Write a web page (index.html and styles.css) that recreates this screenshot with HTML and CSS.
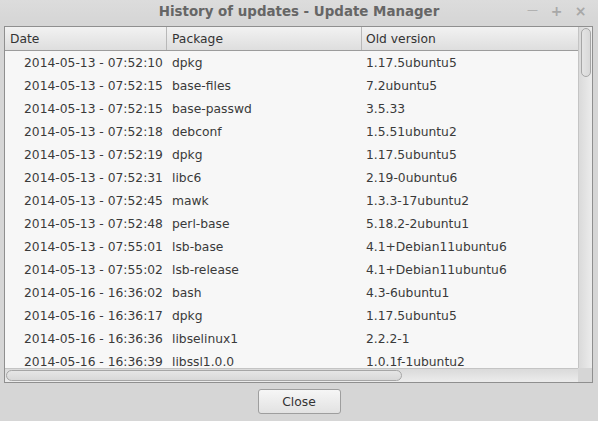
FILE: index.html
```html
<!DOCTYPE html>
<html>
<head>
<meta charset="utf-8">
<link rel="stylesheet" href="styles.css">
</head>
<body>
<div class="window">
  <div class="titlebar">
    <div></div>
    <div class="title">History of updates - Update Manager</div>
    <div class="controls"><span class="ctl">&#8212;</span><span class="ctl">+</span><span class="ctl">&#215;</span></div>
  </div>
  <div class="frame">
    <div class="view">
      <div class="row header">
        <div class="c1">Date</div><div class="c2">Package</div><div class="c3">Old version</div>
      </div>
      <div class="body">
        <div class="row"><div class="c1">2014-05-13 - 07:52:10</div><div class="c2">dpkg</div><div class="c3">1.17.5ubuntu5</div></div>
        <div class="row"><div class="c1">2014-05-13 - 07:52:15</div><div class="c2">base-files</div><div class="c3">7.2ubuntu5</div></div>
        <div class="row"><div class="c1">2014-05-13 - 07:52:15</div><div class="c2">base-passwd</div><div class="c3">3.5.33</div></div>
        <div class="row"><div class="c1">2014-05-13 - 07:52:18</div><div class="c2">debconf</div><div class="c3">1.5.51ubuntu2</div></div>
        <div class="row"><div class="c1">2014-05-13 - 07:52:19</div><div class="c2">dpkg</div><div class="c3">1.17.5ubuntu5</div></div>
        <div class="row"><div class="c1">2014-05-13 - 07:52:31</div><div class="c2">libc6</div><div class="c3">2.19-0ubuntu6</div></div>
        <div class="row"><div class="c1">2014-05-13 - 07:52:45</div><div class="c2">mawk</div><div class="c3">1.3.3-17ubuntu2</div></div>
        <div class="row"><div class="c1">2014-05-13 - 07:52:48</div><div class="c2">perl-base</div><div class="c3">5.18.2-2ubuntu1</div></div>
        <div class="row"><div class="c1">2014-05-13 - 07:55:01</div><div class="c2">lsb-base</div><div class="c3">4.1+Debian11ubuntu6</div></div>
        <div class="row"><div class="c1">2014-05-13 - 07:55:02</div><div class="c2">lsb-release</div><div class="c3">4.1+Debian11ubuntu6</div></div>
        <div class="row"><div class="c1">2014-05-16 - 16:36:02</div><div class="c2">bash</div><div class="c3">4.3-6ubuntu1</div></div>
        <div class="row"><div class="c1">2014-05-16 - 16:36:17</div><div class="c2">dpkg</div><div class="c3">1.17.5ubuntu5</div></div>
        <div class="row"><div class="c1">2014-05-16 - 16:36:36</div><div class="c2">libselinux1</div><div class="c3">2.2.2-1</div></div>
        <div class="row"><div class="c1">2014-05-16 - 16:36:39</div><div class="c2">libssl1.0.0</div><div class="c3">1.0.1f-1ubuntu2</div></div>
      </div>
    </div>
    <div class="vscroll"><div class="vslider"></div></div>
    <div class="hscroll"><div class="hslider"></div></div>
    <div class="corner"></div>
  </div>
  <div class="actions">
    <button class="btn">Close</button>
  </div>
</div>
</body>
</html>
```

FILE: styles.css
```css
* { box-sizing: border-box; }
html, body { margin: 0; padding: 0; }
body {
  width: 598px;
  height: 421px;
  background: #d6d6d6;
  font-family: "DejaVu Sans", sans-serif;
  color: #3a3a3a;
  overflow: hidden;
}
.window {
  display: flex;
  flex-direction: column;
  height: 421px;
}
.titlebar {
  height: 22px;
  display: grid;
  grid-template-columns: 1fr auto 1fr;
  align-items: center;
  background: linear-gradient(#dcdcdc, #d6d6d6);
}
.title {
  font-weight: bold;
  font-size: 13.4px;
  color: #666666;
  padding-top: 1px;
}
.controls {
  display: flex;
  justify-content: flex-end;
  gap: 9px;
  padding-right: 10px;
  color: #a8a8a8;
  font-weight: bold;
  font-size: 14px;
}
.ctl { width: 15px; text-align: center; }
.ctl:first-child { font-size: 11px; font-weight: normal; }
.frame {
  margin: 4px 5px 0 4px;
  height: 357px;
  border: 1px solid #8f8f8f;
  display: grid;
  grid-template-columns: 1fr 14px;
  grid-template-rows: 1fr 14px;
  background: #f7f7f7;
}
.view {
  overflow: hidden;
  display: flex;
  flex-direction: column;
}
.row {
  display: grid;
  grid-template-columns: 162px 195px 1fr;
  height: 23px;
  align-items: center;
  font-size: 12.3px;
  flex-shrink: 0;
}
.row .c1 { padding-left: 19px; }
.row .c2 { padding-left: 5px; }
.row .c3 { padding-left: 4px; }
.header {
  height: 24px;
  background: linear-gradient(#f2f2f2, #dedede);
  border-bottom: 1px solid #9c9c9c;
  align-items: stretch;
  color: #333;
}
.header > div {
  display: flex;
  align-items: center;
  border-right: 1px solid #b8b8b8;
  padding-top: 1px;
}
.header .c1 { padding-left: 5px; }
.header .c3 { border-right: none; }
.body {
  overflow: hidden;
  flex: 1;
}
.vscroll {
  background: linear-gradient(to right, #dadada, #ececec);
  border-left: 1px solid #c4c4c4;
  padding: 1px 1px 0 2px;
}
.vslider {
  height: 49px;
  border: 1px solid #a6a6a6;
  border-radius: 5px;
  background: linear-gradient(to right, #e4e4e4, #d8d8d8);
}
.hscroll {
  background: linear-gradient(#dadada, #ececec);
  border-top: 1px solid #c4c4c4;
  padding: 1px 0 1px 1px;
}
.hslider {
  width: 396px;
  height: 11px;
  border: 1px solid #a6a6a6;
  border-radius: 6px;
  background: linear-gradient(#e6e6e6, #d8d8d8);
}
.corner {
  background: #d6d6d6;
}
.actions {
  display: flex;
  justify-content: center;
  padding-top: 6px;
}
.btn {
  width: 83px;
  height: 25px;
  border: 1px solid #9e9e9e;
  border-radius: 3px;
  background: linear-gradient(#f6f6f6, #e2e2e2);
  font-family: "DejaVu Sans", sans-serif;
  font-size: 12.3px;
  color: #333;
  padding: 0;
}
```
